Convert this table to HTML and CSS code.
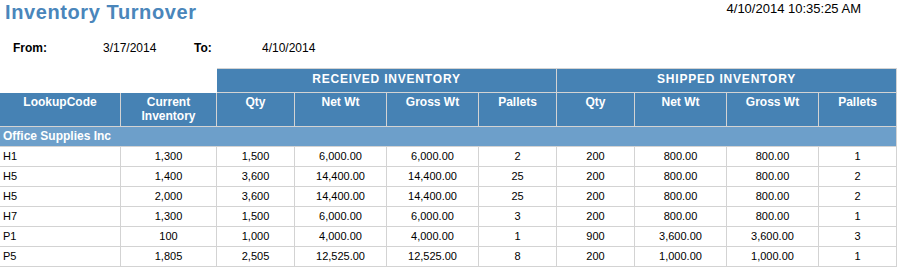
FILE: index.html
```html
<!DOCTYPE html>
<html>
<head>
<meta charset="utf-8">
<link rel="stylesheet" href="styles.css">
</head>
<body>
<div class="top">
  <h1 class="title">Inventory Turnover</h1>
  <div class="stamp">4/10/2014 10:35:25 AM</div>
</div>
<div class="range">
  <span class="lbl">From:</span>
  <span class="val">3/17/2014</span>
  <span class="lbl">To:</span>
  <span class="val">4/10/2014</span>
</div>
<table class="report">
  <colgroup>
    <col class="c-code"><col class="c-cur">
    <col class="c-qty"><col class="c-wt"><col class="c-wt"><col class="c-pal">
    <col class="c-qty"><col class="c-wt"><col class="c-wt"><col class="c-pal">
  </colgroup>
  <thead>
    <tr class="grp">
      <th colspan="2" class="blank"></th>
      <th colspan="4" class="gh">RECEIVED INVENTORY</th>
      <th colspan="4" class="gh">SHIPPED INVENTORY</th>
    </tr>
    <tr class="sub">
      <th>LookupCode</th>
      <th>Current<br>Inventory</th>
      <th>Qty</th><th>Net Wt</th><th>Gross Wt</th><th>Pallets</th>
      <th>Qty</th><th>Net Wt</th><th>Gross Wt</th><th>Pallets</th>
    </tr>
  </thead>
  <tbody>
    <tr class="company"><td colspan="10">Office Supplies Inc</td></tr>
    <tr><td class="code">H1</td><td>1,300</td><td>1,500</td><td>6,000.00</td><td>6,000.00</td><td>2</td><td>200</td><td>800.00</td><td>800.00</td><td>1</td></tr>
    <tr><td class="code">H5</td><td>1,400</td><td>3,600</td><td>14,400.00</td><td>14,400.00</td><td>25</td><td>200</td><td>800.00</td><td>800.00</td><td>2</td></tr>
    <tr><td class="code">H5</td><td>2,000</td><td>3,600</td><td>14,400.00</td><td>14,400.00</td><td>25</td><td>200</td><td>800.00</td><td>800.00</td><td>2</td></tr>
    <tr><td class="code">H7</td><td>1,300</td><td>1,500</td><td>6,000.00</td><td>6,000.00</td><td>3</td><td>200</td><td>800.00</td><td>800.00</td><td>1</td></tr>
    <tr><td class="code">P1</td><td>100</td><td>1,000</td><td>4,000.00</td><td>4,000.00</td><td>1</td><td>900</td><td>3,600.00</td><td>3,600.00</td><td>3</td></tr>
    <tr><td class="code">P5</td><td>1,805</td><td>2,505</td><td>12,525.00</td><td>12,525.00</td><td>8</td><td>200</td><td>1,000.00</td><td>1,000.00</td><td>1</td></tr>
  </tbody>
</table>
</body>
</html>
```
FILE: styles.css
```css
html, body {
  margin: 0;
  padding: 0;
  background: #ffffff;
  font-family: "Liberation Sans", Arial, sans-serif;
  color: #000000;
}

.top {
  display: flex;
  justify-content: space-between;
  align-items: flex-start;
  height: 41px;
}

.title {
  margin: 1px 0 0 5px;
  font-size: 20px;
  line-height: 23px;
  font-weight: bold;
  letter-spacing: 0.6px;
  color: #4a86bb;
}

.stamp {
  margin: 1px 38px 0 0;
  font-size: 13px;
  line-height: 15px;
}

.range {
  display: grid;
  grid-template-columns: 90px 91px 68px auto;
  padding-left: 13px;
  font-size: 12px;
  line-height: 14px;
  height: 14px;
  margin-bottom: 13px;
}

.range .lbl {
  font-weight: bold;
}

.report {
  table-layout: fixed;
  border-collapse: separate;
  border-spacing: 0;
  width: 897px;
}

.report th,
.report td {
  box-sizing: border-box;
  padding: 0;
  border-right: 1px solid #d3d3d3;
  border-bottom: 1px solid #d3d3d3;
  text-align: center;
  vertical-align: top;
  overflow: hidden;
  white-space: nowrap;
}

.c-code { width: 121px; }
.c-cur { width: 96px; }
.c-qty { width: 78px; }
.c-wt { width: 92px; }
.c-pal { width: 78px; }

.report th {
  color: #ffffff;
  font-weight: bold;
  font-size: 12px;
  background: #4682b4;
}

.report .blank {
  background: transparent;
  border: none;
}

.grp .gh {
  border-top: 1px solid #d3d3d3;
  padding: 3px 2px 6px;
  line-height: 14px;
  letter-spacing: 0.8px;
}

.sub th {
  padding: 2px 2px 3px;
  line-height: 14px;
  height: 34px;
}

.report td {
  font-size: 11px;
  line-height: 15px;
  padding: 2px 2px 2px;
}

.report .company td {
  background: #6d9fca;
  color: #ffffff;
  font-weight: bold;
  font-size: 12px;
  text-align: left;
  padding-left: 3px;
}

.report td.code {
  text-align: left;
  padding-left: 3px;
}
```
